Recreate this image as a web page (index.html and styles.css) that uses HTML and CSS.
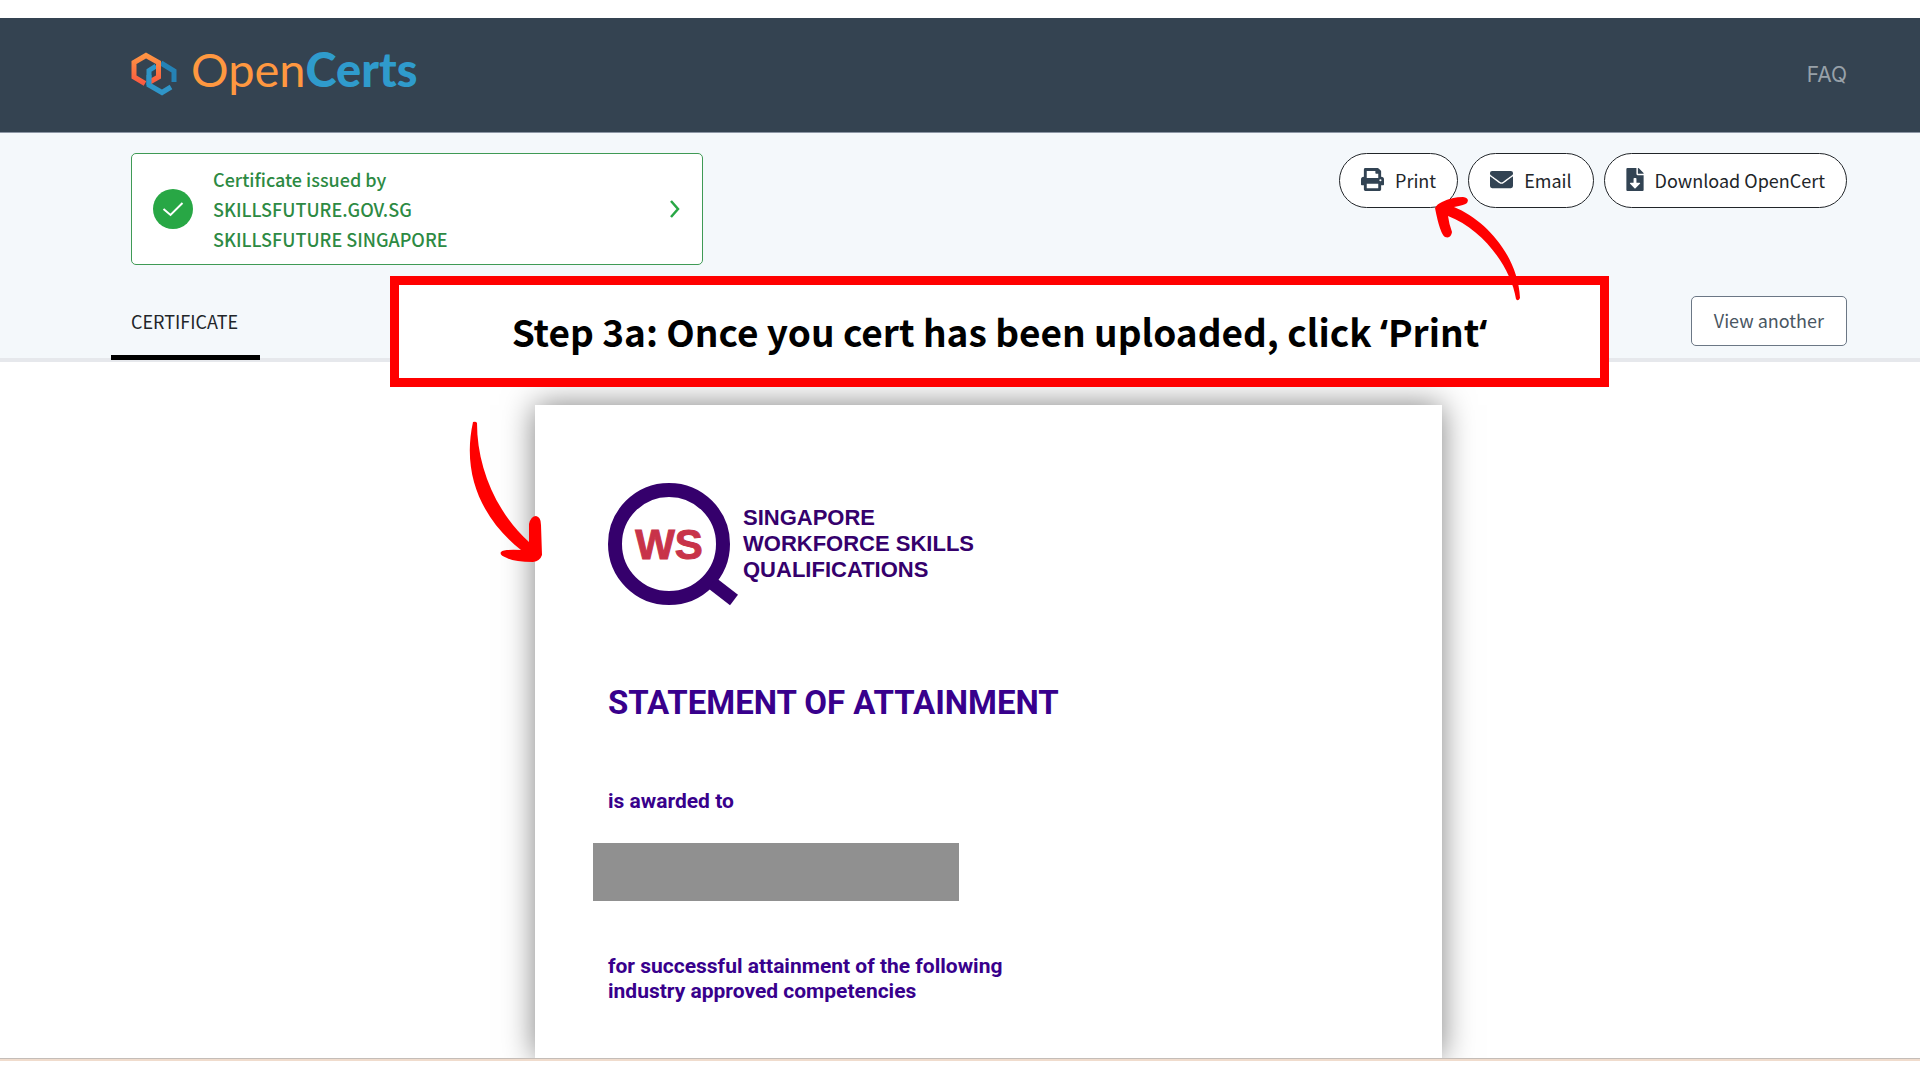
FILE: index.html
```html
<!DOCTYPE html>
<html lang="en">
<head>
  <meta charset="UTF-8">
  <meta name="viewport" content="width=device-width, initial-scale=1.0">
  <title>OpenCerts</title>
  <link rel="stylesheet" href="styles.css">
</head>
<body>
  <header class="navbar">
    <a class="brand" href="#">
      <svg class="brand-icon" width="46" height="44" viewBox="0 0 46 44" fill="none" stroke-width="5">
        <defs>
          <linearGradient id="orange" x1="0" y1="0" x2="0" y2="1">
            <stop offset="0" stop-color="#ff9443"/>
            <stop offset="1" stop-color="#fb5a40"/>
          </linearGradient>
        </defs>
        <path d="M30 11L43 19V30" stroke="#2582b5"/>
        <path d="M25 14L18 18.500V33L31 40.500L40 35" stroke="#2f95c8"/>
        <path d="M17 31L27.500 25V10.500L15 3.500L3 10.500V25L14 31.500" stroke="url(#orange)"/>
        <path d="M18 23V33" stroke="#2f95c8"/>
      </svg>
      <span class="brand-name">Open<b>Certs</b></span>
    </a>
    <a class="nav-link" href="#">FAQ</a>
  </header>

  <section class="panel">
    <div class="panel-top">
      <button type="button" class="issuer">
        <svg class="issuer-check" width="40" height="40" viewBox="0 0 40 40">
          <circle cx="20" cy="20" r="20" fill="#28a745"/>
          <path d="M10.500 20L17.500 26L29.500 14" fill="none" stroke="#fff" stroke-width="2"/>
        </svg>
        <span class="issuer-text">Certificate issued by<br>SKILLSFUTURE.GOV.SG<br>SKILLSFUTURE SINGAPORE</span>
        <svg width="12" height="18" viewBox="0 0 12 18" fill="none" stroke="#28a745" stroke-width="2.500">
          <path d="M2 1L9 9L2 17"/>
        </svg>
      </button>
      <div class="actions">
        <button type="button" class="pill">
          <svg width="23" height="23" viewBox="0 0 512 512" fill="#324353">
            <path d="M448 192V77a32 32 0 0 0-9-22L393 9a32 32 0 0 0-22-9H96a32 32 0 0 0-32 32v160a64 64 0 0 0-64 64v112a16 16 0 0 0 16 16h48v96a32 32 0 0 0 32 32h320a32 32 0 0 0 32-32v-96h48a16 16 0 0 0 16-16V256a64 64 0 0 0-64-64zM384 448H128v-96h256zm0-224H128V64h192v48a16 16 0 0 0 16 16h48zm48 72a24 24 0 1 1 0-48 24 24 0 0 1 0 48z"/>
          </svg>
          Print
        </button>
        <button type="button" class="pill">
          <svg width="23" height="23" viewBox="0 0 512 512" fill="#324353">
            <path d="M502 191a6 6 0 0 1 10 5v204a48 48 0 0 1-48 48H48a48 48 0 0 1-48-48V196a6 6 0 0 1 10-5c22 18 52 40 155 114 21 16 57 48 91 48s71-33 91-48c103-74 133-96 155-114zM256 320c23 0 57-30 74-42 133-96 143-105 173-129a24 24 0 0 0 9-19v-18a48 48 0 0 0-48-48H48a48 48 0 0 0-48 48v18a24 24 0 0 0 9 19c30 24 40 33 173 129 17 12 51 42 74 42z"/>
          </svg>
          Email
        </button>
        <button type="button" class="pill">
          <svg width="18" height="23" viewBox="0 0 384 512" fill="#324353">
            <path d="M224 136V0H24A24 24 0 0 0 0 24v464a24 24 0 0 0 24 24h336a24 24 0 0 0 24-24V160H248a24 24 0 0 1-24-24zm77 217L204 449a17 17 0 0 1-24 0L84 353a16 16 0 0 1 11-27h65v-86a16 16 0 0 1 16-16h32a16 16 0 0 1 16 16v86h65a16 16 0 0 1 12 27zM377 105L279 7a24 24 0 0 0-17-7h-6v128h128v-6a24 24 0 0 0-7-17z"/>
          </svg>
          Download OpenCert
        </button>
      </div>
    </div>
    <div class="panel-tabs">
      <a class="tab" href="#">CERTIFICATE</a>
      <button type="button" class="view-another">View another</button>
    </div>
  </section>

  <main class="viewer">
    <article class="paper">
      <div class="wsq">
        <svg width="131" height="124" viewBox="0 0 131 124">
          <circle cx="61" cy="62" r="54" fill="none" stroke="#35006c" stroke-width="14"/>
          <path d="M104 101L126 118" stroke="#35006c" stroke-width="13"/>
          <text class="wsq-ws" x="61" y="77" text-anchor="middle">WS</text>
        </svg>
        <p class="wsq-name">SINGAPORE<br>WORKFORCE SKILLS<br>QUALIFICATIONS</p>
      </div>
      <h1 class="paper-title">STATEMENT OF ATTAINMENT</h1>
      <p class="paper-text">is awarded to</p>
      <div class="redacted"></div>
      <p class="paper-text">for successful attainment of the following<br>industry approved competencies</p>
    </article>
  </main>
  <div class="bottom-line"></div>

  <div class="callout">Step 3a: Once you cert has been uploaded, click <span class="quote">‘</span>Print<span class="quote">‘</span></div>

  <svg class="arrow arrow-print" width="88" height="106" viewBox="0 0 88 106" fill="#f00">
    <path d="M1 12Q3 8 8 6Q18 1 29 1Q36 2 33 7Q31 9 20 11C52 24 84 60 86 102Q84 106 82 103C77 72 50 34 14 20Q15 28 18 36Q17 43 11 41Q6 38 1 12Z"/>
  </svg>
  <svg class="arrow arrow-paper" width="76" height="143" viewBox="0 0 76 143" fill="#f00">
    <path d="M4 1Q7 0 8 2C8 45 26 90 60 121L60 103Q62 95 67 95Q72 96 72 104L73 134Q71 140 64 141Q45 141 38 137Q30 134 32 131Q35 128 52 129C15 100-8 55 4 1Z"/>
  </svg>
</body>
</html>
```
FILE: styles.css
```css
* {
  box-sizing: border-box;
}

body {
  position: relative;
  margin: 0;
  padding: 18px 0;
  background-color: #fff;
  color: #212529;
  font-family: "Noto Sans CJK SC", "Noto Sans", sans-serif;
  font-size: 18px;
}

a {
  color: inherit;
  text-decoration: none;
}

button {
  background-color: #fff;
  color: inherit;
  font: inherit;
  cursor: pointer;
}

p,
h1 {
  margin: 0;
}

/* header */
.navbar {
  display: flex;
  align-items: center;
  justify-content: space-between;
  height: 115px;
  padding: 0 73px 2px 131px;
  border-bottom: 1px solid #8d97a5;
  background-color: #344351;
}

.brand {
  display: flex;
  align-items: center;
  gap: 14px;
}

.brand-name {
  padding-bottom: 10px;
  color: #ff9840;
  font-family: Lato, sans-serif;
  font-size: 47px;
  line-height: 60px;
}

.brand-name b {
  color: #2f9bcc;
  font-weight: 900;
}

.nav-link {
  color: #98a1a9;
  font-family: Inter, sans-serif;
  font-size: 21px;
}

/* issuer and actions */
.panel {
  padding: 20px 73px 0 131px;
  border-bottom: 4px solid #e6e8ec;
  background-color: #f4f8fb;
}

.panel-top {
  display: flex;
  align-items: flex-start;
  justify-content: space-between;
}

.issuer {
  display: flex;
  align-items: center;
  width: 572px;
  padding: 10px 21px;
  border: 1px solid #3f9a55;
  border-radius: 5px;
  color: #2d8a43;
  text-align: left;
}

.issuer-check {
  margin-right: 20px;
}

.issuer-text {
  flex: 1;
  font-weight: 500;
  line-height: 30px;
}

.actions {
  display: flex;
  gap: 10px;
}

.pill {
  display: flex;
  align-items: center;
  gap: 11px;
  height: 55px;
  padding: 0 21px 2px;
  border: 1px solid #212529;
  border-radius: 28px;
}

.panel-tabs {
  display: flex;
  align-items: flex-end;
  justify-content: space-between;
  padding-top: 30px;
}

.tab {
  height: 65px;
  margin: 0 0 -2px -20px;
  padding: 10px 22px 0 20px;
  border-bottom: 5px solid #000;
  line-height: 32px;
}

.view-another {
  height: 50px;
  margin-bottom: 12px;
  padding: 0 22px 2px;
  border: 1px solid #6b7785;
  border-radius: 5px;
  color: #495662;
}

/* certificate */
.viewer {
  padding: 43px 74px 0 131px;
  overflow: hidden;
}

.paper {
  max-width: 907px;
  margin: 0 auto;
  padding: 77px 58px 54px;
  background-color: #fff;
  box-shadow: 0 0 30px rgba(0, 0, 0, 0.5);
  color: #38008c;
  font-family: Roboto, sans-serif;
}

.wsq {
  display: flex;
  align-items: center;
  gap: 4px;
  padding-left: 15px;
}

.wsq-ws {
  fill: #c83349;
  stroke: #c83349;
  stroke-width: 1px;
  font-family: "Liberation Sans", sans-serif;
  font-size: 42px;
  font-weight: bold;
}

.wsq-name {
  color: #35006c;
  font-family: "Liberation Sans", sans-serif;
  font-size: 22px;
  font-weight: bold;
  line-height: 26px;
}

.paper-title {
  padding: 77px 15px 66px;
  font-size: 33px;
  font-weight: bold;
  line-height: 40px;
}

.paper-text {
  padding: 0 15px;
  font-size: 21px;
  font-weight: bold;
  line-height: 25px;
}

.redacted {
  width: 366px;
  height: 58px;
  margin: 29px 0 53px;
  background-color: #909090;
}

.bottom-line {
  height: 3px;
  border-top: 1px solid #c4bdb8;
  background-color: #f0dccd;
}

/* tutorial notes over the page */
.callout {
  position: absolute;
  top: 276px;
  left: 390px;
  right: 311px;
  height: 111px;
  border: 9px solid #f00;
  background-color: #fff;
  color: #000;
  font-size: 37px;
  font-weight: bold;
  line-height: 92px;
  text-align: center;
  white-space: nowrap;
}

.quote {
  font-family: "Noto Sans", sans-serif;
}

.arrow {
  position: absolute;
}

.arrow-print {
  top: 196px;
  right: 398px;
}

.arrow-paper {
  top: 421px;
  left: 469px;
}
```
